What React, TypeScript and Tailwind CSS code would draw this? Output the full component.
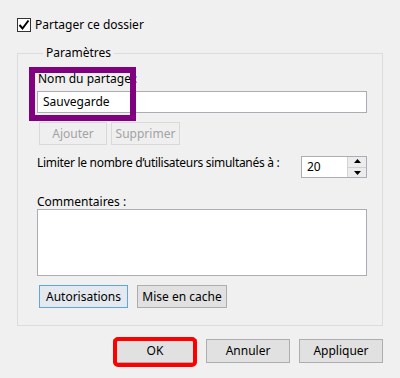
import React from "react";

function Btn({
  children,
  className = "",
}: {
  children: React.ReactNode;
  className?: string;
}) {
  return (
    <div
      className={
        "h-[23px] flex items-center justify-center border border-[#adadad] bg-[#e1e1e1] text-black " +
        className
      }
    >
      {children}
    </div>
  );
}

export default function App() {
  return (
    <div className="relative w-[400px] h-[378px] overflow-hidden bg-[#f0f0f0] text-[12px] leading-[16px] text-black font-['Noto_Sans',sans-serif]">
      {/* checkbox row */}
      <div className="flex items-center gap-[4px] pt-[18px] pl-[17px]">
        <div className="w-[14px] h-[14px] border border-[#333333] bg-white flex items-center justify-center">
          <svg width="12" height="12" viewBox="0 0 12 12">
            <polyline
              points="1.5,6 4.5,9.5 10.5,1.5"
              fill="none"
              stroke="#000"
              strokeWidth="2"
            />
          </svg>
        </div>
        <span className="leading-[14px]">Partager ce dossier</span>
      </div>

      {/* group box */}
      <fieldset className="mt-[13px] ml-[17px] w-[366px] h-[281px] border border-[#dcdcdc] pl-[19px] pr-[15px]">
        <legend className="ml-[6px] px-[3px] leading-[16px]">Paramètres</legend>

        <div className="mt-[10px] ml-[1px] leading-[16px]">Nom du partage :</div>
        <div className="mt-[4px] h-[22px] w-full bg-white border border-[#abadb3] flex items-center pl-[5px]">
          Sauvegarde
        </div>

        <div className="mt-[9px] ml-[2px] flex gap-[4px]">
          <div className="w-[68px] h-[23px] flex items-center justify-center border border-[#d9d9d9] bg-[#efefef] text-[#a3a3a3]">
            Ajouter
          </div>
          <div className="w-[69px] h-[23px] flex items-center justify-center border border-[#d9d9d9] bg-[#efefef] text-[#a3a3a3]">
            Supprimer
          </div>
        </div>

        <div className="mt-[10px] flex items-start justify-between">
          <span className="leading-[16px] tracking-[-0.3px]">
            Limiter le nombre d’utilisateurs simultanés à :
          </span>
          <div className="mt-[1px] w-[66px] h-[22px] bg-white border border-[#abadb3] flex">
            <div className="flex-1 flex items-center pl-[5px]">20</div>
            <div className="w-[19px] flex flex-col border-l border-[#d4d4d4]">
              <div className="flex-1 flex items-center justify-center bg-[#ececec] border-b border-[#d0d0d0]">
                <svg width="7" height="5" viewBox="0 0 7 5">
                  <polygon points="3.5,0 7,4 0,4" fill="#000" />
                </svg>
              </div>
              <div className="flex-1 flex items-center justify-center bg-[#ececec]">
                <svg width="7" height="5" viewBox="0 0 7 5">
                  <polygon points="0,1 7,1 3.5,5" fill="#000" />
                </svg>
              </div>
            </div>
          </div>
        </div>

        <div className="mt-[17px] leading-[14px]">Commentaires :</div>
        <div className="h-[67px] w-full bg-white border border-[#abadb3]" />

        <div className="mt-[9px] ml-[2px] flex gap-[9px]">
          <Btn className="w-[89px] !border-[#5fa5e6] !bg-[#e3e9ef]">Autorisations</Btn>
          <Btn className="w-[90px]">Mise en cache</Btn>
        </div>
      </fieldset>

      {/* bottom buttons */}
      <div className="mt-[13px] pr-[17px] flex justify-end gap-[9px]">
        <div className="relative">
          <Btn className="w-[84px] h-[24px]">OK</Btn>
          <div className="absolute -top-[2px] -bottom-[4px] left-0 right-0 border-[4px] border-[#ff0000] rounded-[5px]" />
        </div>
        <Btn className="w-[84px] h-[24px]">Annuler</Btn>
        <Btn className="w-[84px] h-[24px]">Appliquer</Btn>
      </div>

      {/* purple annotation */}
      <div className="absolute left-[29px] top-[67px] w-[107px] h-[54px] border-[6px] border-[#800080]" />
    </div>
  );
}
